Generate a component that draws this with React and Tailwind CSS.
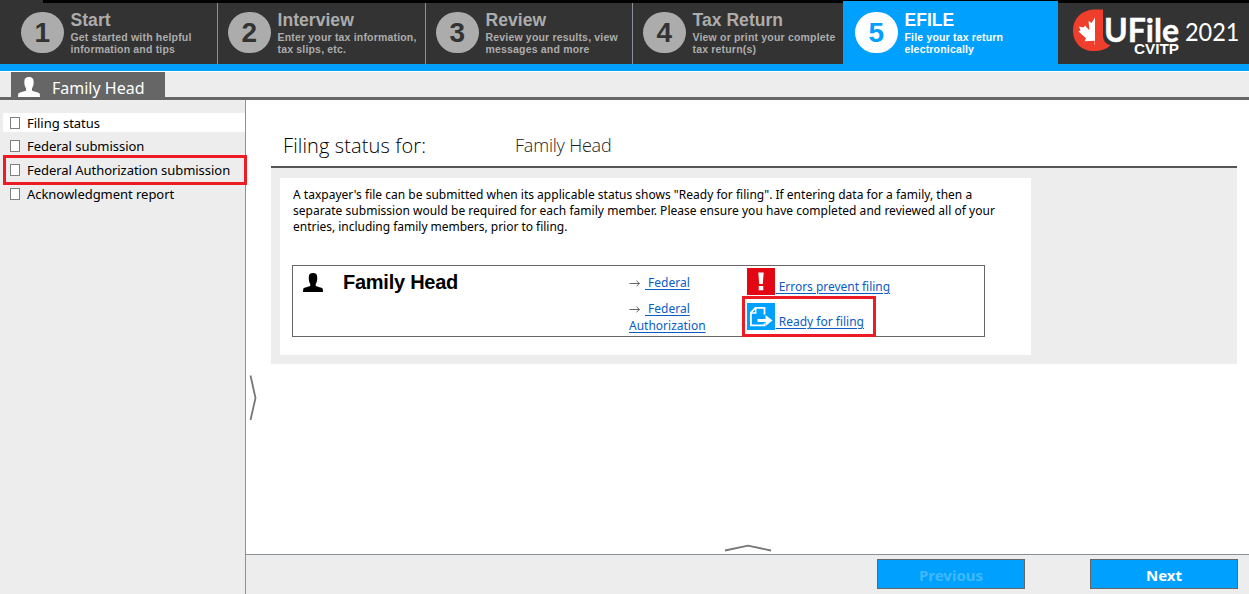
import React from "react";

const steps = [
  { n: "1", title: "Start", lines: ["Get started with helpful", "information and tips"], box: "w-[218px] pl-[21px] border-r border-[#8b9199]" },
  { n: "2", title: "Interview", lines: ["Enter your tax information,", "tax slips, etc."], box: "w-[208px] pl-[10px] border-r border-[#8b9199]" },
  { n: "3", title: "Review", lines: ["Review your results, view", "messages and more"], box: "w-[207px] pl-[10px] border-r border-[#8b9199]" },
  { n: "4", title: "Tax Return", lines: ["View or print your complete", "tax return(s)"], box: "w-[210px] pl-[10px]" },
  { n: "5", title: "EFILE", lines: ["File your tax return", "electronically"], box: "w-[215px] pl-[12px]", active: true },
];

const sideItems = ["Filing status", "Federal submission", "Federal Authorization submission", "Acknowledgment report"];

function Step({ step }) {
  const { n, title, lines, box, active } = step;
  return (
    <div className={`${box} flex shrink-0 ${active ? "-mt-[2px] bg-[#00a0ff] pt-[11px] text-white" : "bg-[#333333] pt-[9px] text-[#acacac]"}`}>
      <div
        className={`flex h-[41px] w-[42.5px] shrink-0 items-center justify-center rounded-full text-[28px] font-bold leading-none ${
          active ? "bg-white text-[#00a0ff]" : "bg-[#acacac] text-[#333333]"
        }`}
      >
        {n}
      </div>
      <div className="-mt-[1px] pl-[7px] whitespace-nowrap">
        <div className="h-[20px] text-[17.5px] font-bold leading-[18px] tracking-[0.05px]">{title}</div>
        {lines.map((line) => (
          <div key={line} className="text-[10.5px] font-bold leading-[12px] tracking-[0.18px]">{line}</div>
        ))}
      </div>
    </div>
  );
}

function Logo() {
  return (
    <svg width="191" height="61" viewBox="1058 3 191 61" className="shrink-0">
      <path d="M1103 9.5 H1094 C1081 10 1073 19 1073 30.500 C1073 43 1082 51 1093 51 C1101 51 1107 49 1110.500 45 C1105 44 1103 40 1103 35 Z" fill="#ef3e2c" />
      <path d="M1094.500 44.500 L1094.700 40.700 L1084.500 41.300 L1086 38.300 L1078.500 31.500 L1080.500 30.500 L1079 26.500 L1083.500 27.500 L1085 25.500 L1089.500 30.500 L1088.500 21 L1091.500 23 L1095 17.500 L1095 44.500 Z" fill="#fff" />
      <g fill="#fff" fontFamily="Lato, sans-serif">
        <text x="1104" y="41.500" fontSize="32" fontWeight="700" stroke="#fff" strokeWidth="0.400" textLength="75" lengthAdjust="spacingAndGlyphs">UFile</text>
        <text x="1185" y="40.500" fontSize="24.500" textLength="54.500" lengthAdjust="spacingAndGlyphs">2021</text>
      </g>
      <text x="1134" y="53.800" fontSize="14.500" fontWeight="700" fill="#fff" fontFamily="'Liberation Sans', sans-serif" textLength="45" lengthAdjust="spacingAndGlyphs">CVITP</text>
    </svg>
  );
}

function Person({ className }) {
  return (
    <svg viewBox="0 0 20 19" preserveAspectRatio="none" className={className} fill="currentColor">
      <path d="M10 0 C7 0 5.800 1.600 5.800 4 V6.500 C6 8.500 6.800 10 7.300 11 V12.800 C6 14 1 14.200 0.200 16 L0 19 H20 L19.800 16 C19 14.200 14 14 12.700 12.800 V11 C13.200 10 14 8.500 14.200 6.500 V4 C14.200 1.600 13 0 10 0 Z" />
    </svg>
  );
}

function Arrow() {
  return (
    <svg width="11" height="9" viewBox="0 0 11 9" fill="none" stroke="#666" className="inline-block align-baseline">
      <path d="M0.500 5.500 H10.500 M7.500 2.800 L10.500 5.500 L7.500 8.200" />
    </svg>
  );
}

function AlertIcon() {
  return (
    <svg width="28" height="27" viewBox="0 0 28 27" className="shrink-0">
      <rect width="28" height="27" fill="#e30613" />
      <path d="M11.300 4.500 H16.700 L15.800 16 H12.200 Z M11.700 18 H16.300 V22.300 H11.700 Z" fill="#fff" />
    </svg>
  );
}

function SubmitIcon() {
  return (
    <svg width="28" height="27" viewBox="0 0 28 27" className="shrink-0">
      <rect width="28" height="27" fill="#00a0ff" />
      <g fill="none" stroke="#fff" strokeWidth="1.800">
        <path d="M17.500 11.500 V4.900 H8.500 L3.900 9.500 V22.300 H17.500 V20.500" />
        <path d="M8.700 5 V10 H4" strokeWidth="1.500" />
      </g>
      <path d="M10.500 16 H18.500 V12 L25.500 17.500 L18.500 23 V19 H10.500 Z" fill="#fff" />
    </svg>
  );
}

const linkCls = "text-[#0b5cc4] underline underline-offset-2 decoration-1 whitespace-pre";

export default function App() {
  return (
    <div className="flex h-[594px] w-[1249px] flex-col overflow-hidden bg-white font-['Noto_Sans',sans-serif] text-black">
      <header className="flex h-[71px] shrink-0 flex-col border-b-[7px] border-[#00a0ff] bg-[#333333] font-['Liberation_Sans',sans-serif]">
        <div className="ml-[43px] h-[3px] shrink-0 bg-black" />
        <div className="flex h-[61px]">
          {steps.map((s) => <Step key={s.n} step={s} />)}
          <Logo />
        </div>
      </header>

      <div className="flex h-[29px] shrink-0 items-end border-b-[3px] border-t border-b-[#666] border-t-white bg-[#ededed]">
        <div className="ml-[11px] flex h-[25px] w-[154px] items-end bg-[#666] text-white">
          <Person className="ml-[7px] h-[20px] w-[22px]" />
          <span className="ml-[12px] text-[16px] leading-[18px]">Family Head</span>
        </div>
      </div>

      <div className="flex min-h-0 flex-1">
        <aside className="relative w-[246px] shrink-0 border-r border-[#8b9199] bg-[#ededed] pl-[3px] pt-[13px]">
          <ul className="flex flex-col gap-[5px]">
            {sideItems.map((item, i) => (
              <li key={item} className={`flex h-[19px] pl-[7px] text-[13px] ${i === 0 ? "bg-white" : ""}`}>
                <span className={`h-[12px] w-[10px] border border-[#808080] bg-white ${i === 0 ? "mt-[4px]" : "mt-[3px]"}`} />
                <span className={`ml-[7px] whitespace-nowrap leading-[19px] tracking-[-0.04px] ${i === 0 ? "pt-px" : ""}`}>{item}</span>
              </li>
            ))}
          </ul>
          <div className="absolute left-[3px] top-[55px] z-10 h-[30px] w-[244px] border-[3px] border-[#ed1c24]" />
        </aside>

        <div className="flex min-w-0 flex-1 flex-col">
          <main className="relative flex-1 pl-[25px] pr-[12px]">
            <div className="flex h-[68px] items-end border-b-2 border-[#555] pb-[6px] pl-[12px] font-['Open_Sans',sans-serif] font-light leading-[28px]">
              <h1 className="w-[232px] text-[20px] tracking-[0.12px]">Filing status for:</h1>
              <span className="mb-px text-[18px] tracking-[-0.2px] text-[#222]">Family Head</span>
            </div>
            <section className="h-[196px] bg-[#ededed] pl-[9px] pt-[10px]">
              <div className="h-[177px] w-[751px] bg-white pl-[12px] pt-[9px]">
                <div className="ml-px whitespace-nowrap text-[12px] leading-[16px]">
                  <p className="tracking-[0.012px]">A taxpayer's file can be submitted when its applicable status shows "Ready for filing". If entering data for a family, then a</p>
                  <p className="tracking-[0.028px]">separate submission would be required for each family member. Please ensure you have completed and reviewed all of your</p>
                  <p className="tracking-[-0.02px]">entries, including family members, prior to filing.</p>
                </div>
                <div className="relative mt-[30px] flex h-[72px] w-[693px] border border-[#666]">
                  <Person className="ml-[10px] mt-[7px] h-[19px] w-[20px]" />
                  <h2 className="ml-[20px] mt-[4px] w-[286px] font-['Liberation_Sans',sans-serif] text-[20px] font-bold leading-[24px] tracking-[-0.25px]">Family Head</h2>
                  <div className="w-[118px] text-[12px] leading-[17px]">
                    <div className="mt-[8px]"><Arrow /><a className={`${linkCls} ml-[5px]`}>{" Federal"}</a></div>
                    <div className="mt-[9px]"><Arrow /><a className={`${linkCls} ml-[5px]`}>{" Federal\nAuthorization"}</a></div>
                  </div>
                  <div className="text-[12px] leading-[17px]">
                    <a className={`${linkCls} mt-[2px] flex h-[27px] items-end`}><AlertIcon /><span className="pl-[0.6px] tracking-[-0.03px]">{" Errors prevent filing"}</span></a>
                    <a className={`${linkCls} mt-[8px] flex h-[27px] items-end`}><SubmitIcon /><span className="pl-[0.6px]">{" Ready for filing"}</span></a>
                  </div>
                  <div className="absolute left-[449px] top-[30px] h-[41px] w-[134px] border-[3px] border-[#ed1c24]" />
                </div>
              </div>
            </section>
            <svg className="absolute left-[3px] top-[274px]" width="10" height="48" fill="none" stroke="#777" strokeWidth="1.800">
              <path d="M1.500 1.500 L6.500 24 L1.500 46" />
            </svg>
            <svg className="absolute left-[478px] top-[443px]" width="49" height="10" fill="none" stroke="#777" strokeWidth="1.800">
              <path d="M1 7.500 L24 2.700 L47 7.500" />
            </svg>
          </main>
          <footer className="flex h-[40px] shrink-0 gap-[65px] border-t border-[#8b9199] bg-[#ededed] pl-[631px] pt-[4px] text-[15px] font-bold leading-[30px]">
            <button className="flex h-[30px] w-[148px] justify-center border border-[#666] bg-[#00a0ff] text-[#40b8ff]">Previous</button>
            <button className="flex h-[30px] w-[148px] justify-center border border-[#666] bg-[#00a0ff] text-white">Next</button>
          </footer>
        </div>
      </div>
    </div>
  );
}
